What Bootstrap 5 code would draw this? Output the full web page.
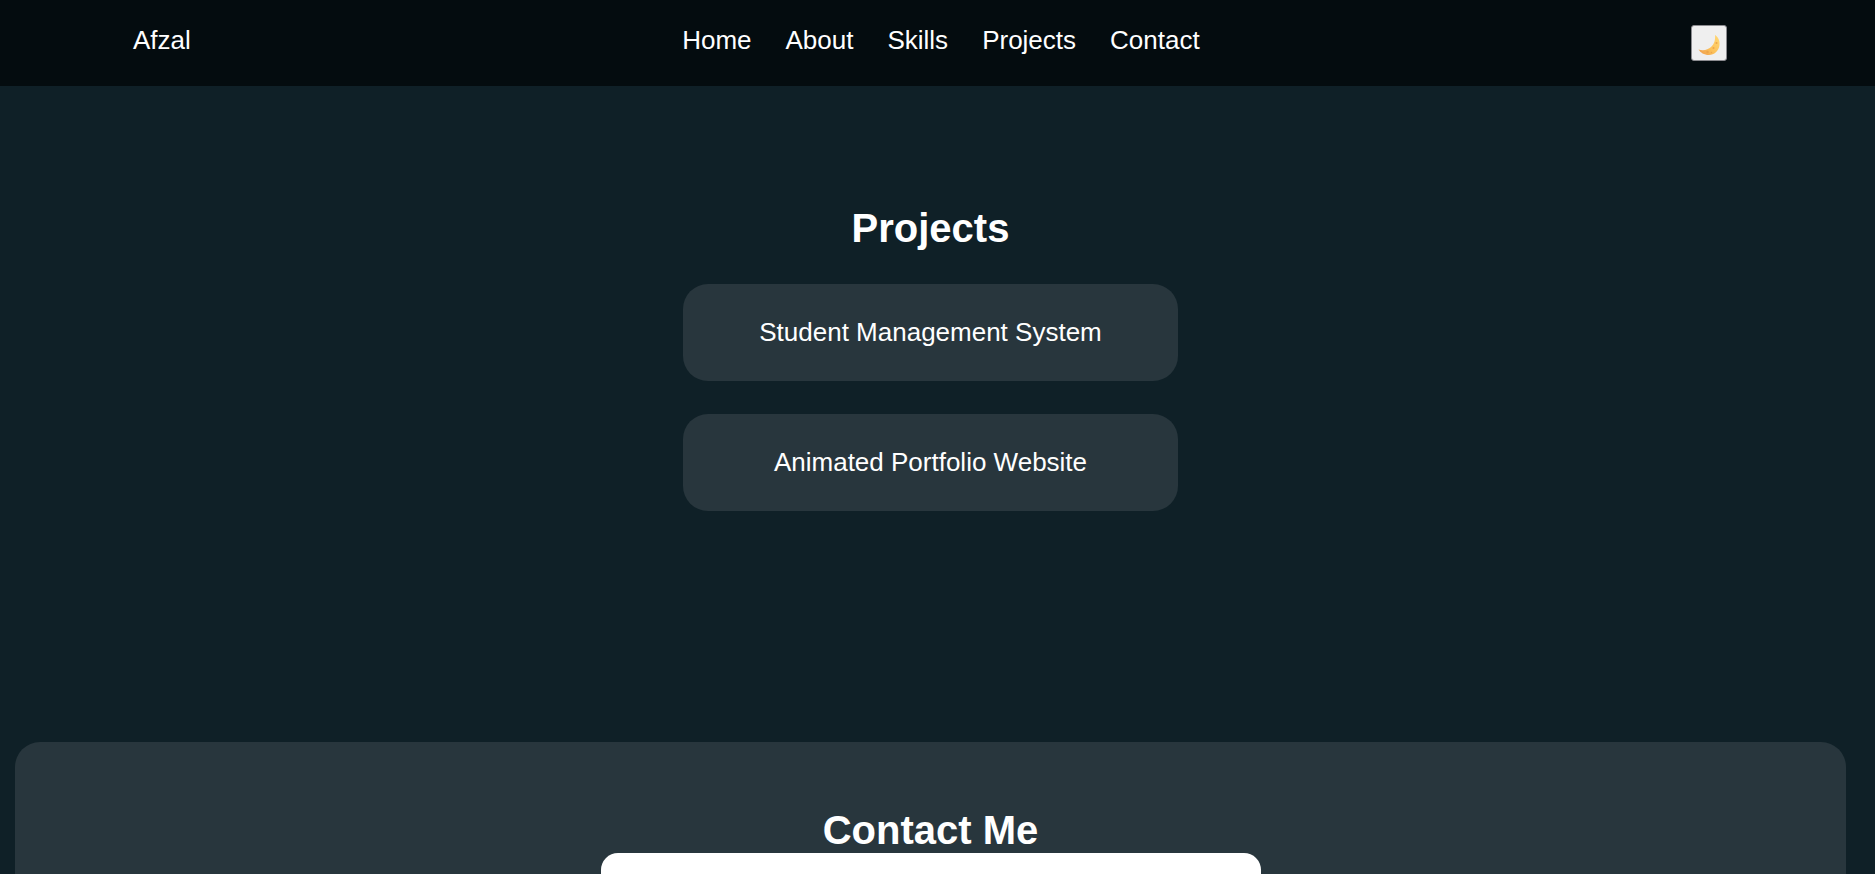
<!DOCTYPE html>
<html lang="en">
<head>
<meta charset="utf-8">
<meta name="viewport" content="width=device-width, initial-scale=1">
<title>Afzal | Portfolio</title>
<link href="https://cdn.jsdelivr.net/npm/bootstrap@5.3.0/dist/css/bootstrap.min.css" rel="stylesheet">
<style>
  body {
    background: #0f2027;
    color: #fff;
    font-family: "Liberation Sans", Arial, sans-serif;
    font-size: 26px;
    line-height: 30px;
  }
  .site-nav { background: #040c0f; padding: 25px 148px 31px 133px; }
  .site-nav a { color: #fff; text-decoration: none; }
  .site-links { gap: 34px; }
  .theme-toggle {
    width: 36px;
    height: 36px;
    background: #efefef;
    border: 1px solid #8b8b8f;
    border-radius: 3px;
    margin-bottom: -6px;
  }
  main { padding: 0 29px 0 15px; }
  h2 { font-size: 40px; font-weight: 700; line-height: 46px; }
  .projects { padding: 119px 0 231px; }
  .project-list { gap: 33px; margin-top: 33px; }
  .project-tile, .contact-panel { background: #28363d; border-radius: 25px; }
  .project-tile { width: 495px; max-width: 100%; padding: 33px; min-height: 97px; }
  .contact-panel { padding: 65px 33px; }
  .contact-form { width: 660px; max-width: 100%; border-radius: 17px; min-height: 300px; }
</style>
</head>
<body class="vh-100 overflow-hidden">
<nav class="site-nav d-flex justify-content-between align-items-start" aria-label="Main">
  <a href="#home">Afzal</a>
  <ul class="site-links list-unstyled d-flex flex-wrap mb-0">
    <li><a href="#home">Home</a></li>
    <li><a href="#about">About</a></li>
    <li><a href="#skills">Skills</a></li>
    <li><a href="#projects">Projects</a></li>
    <li><a href="#contact">Contact</a></li>
  </ul>
  <button class="theme-toggle d-flex align-items-center justify-content-center p-0" type="button" aria-label="Toggle theme">
    <svg width="24" height="26" viewBox="0 0 24 26" aria-hidden="true">
      <defs>
        <linearGradient id="moon" x1="1" y1="0" x2="0" y2="1">
          <stop offset="0" stop-color="#ffd977"/>
          <stop offset=".55" stop-color="#fcc25a"/>
          <stop offset="1" stop-color="#ee9a4c"/>
        </linearGradient>
      </defs>
      <path d="M18 5C21 7 23 10 22.500 15C22 21 17 25 12 25C7 25 3.500 22.500 1.500 19.500C6 21 11 20 14 17C17.500 14 18.500 9 18 5Z" fill="url(#moon)"/>
      <g fill="#eda64a">
        <circle cx="19.500" cy="13" r="1"/>
        <circle cx="16.500" cy="18" r="1"/>
        <circle cx="10.500" cy="22" r="1.200"/>
        <circle cx="14.500" cy="22.500" r=".7"/>
      </g>
    </svg>
  </button>
</nav>
<main>
  <section id="projects" class="projects text-center">
    <h2 class="mb-0">Projects</h2>
    <div class="project-list d-flex flex-column align-items-center">
      <div class="project-tile">Student Management System</div>
      <div class="project-tile">Animated Portfolio Website</div>
    </div>
  </section>
  <section id="contact" class="contact-panel text-center">
    <h2 class="mb-0">Contact Me</h2>
    <form class="contact-form bg-white mx-auto" aria-label="Contact form"></form>
  </section>
</main>
<script src="https://cdn.jsdelivr.net/npm/bootstrap@5.3.0/dist/js/bootstrap.bundle.min.js"></script>
</body>
</html>
